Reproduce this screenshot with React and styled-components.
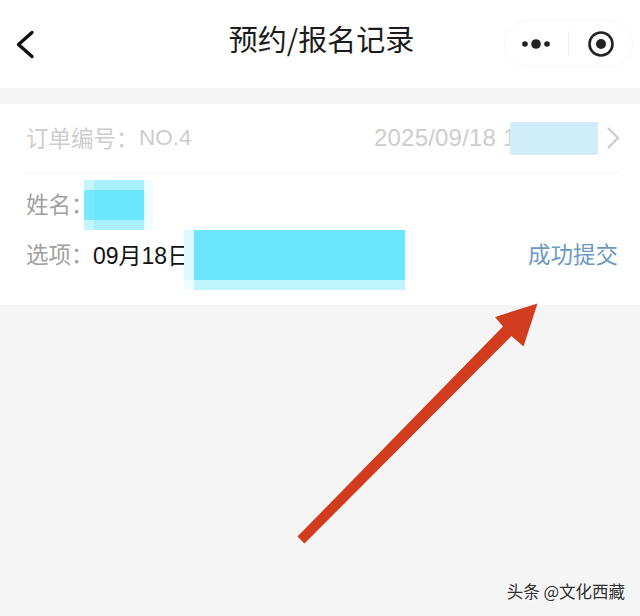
import React from 'react'
import styled, { createGlobalStyle } from 'styled-components'

const GlobalStyle = createGlobalStyle`
  html, body {
    margin:0;
    padding:0;
    background:#f5f5f5;
  }
  body {
    font-family:"Liberation Sans","Noto Sans CJK SC",sans-serif;
  }
`

const Page = styled.div`
  position:relative;
  width:640px;
  height:616px;
  overflow:hidden;
  background:#f5f5f5;
`

const NavBar = styled.header`
  height:88px;
  background:#fff;
  display:grid;
  grid-template-columns:1fr auto 1fr;
  align-items:center;
  padding:0 7px 12px 10px;
  box-sizing:border-box;
`

const BackButton = styled.svg`
  width:20px;
  height:32px;
  display:block;
  margin:14px 0 0 6px;
`

const Title = styled.h1`
  margin:0;
  font-family:"Noto Sans CJK SC",sans-serif;
  font-size:29px;
  line-height:40px;
  font-weight:400;
  color:#1c1c1c;
  white-space:nowrap;
`

const Capsule = styled.div`
  justify-self:end;
  width:129px;
  height:47px;
  margin-top:11px;
  box-sizing:border-box;
  border:1px solid #f7f7f7;
  border-radius:24px;
  display:flex;
  align-items:center;
`

const CapsuleSide = styled.div`
  flex:1;
  height:100%;
  display:flex;
  align-items:center;
  justify-content:center;
  & + & {
    position:relative;
    padding-left:2px;
  }
  & + &::before {
    content:"";
    position:absolute;
    left:0;
    top:10px;
    bottom:10px;
    width:1px;
    background:#f2f2f2;
  }
`

const Card = styled.section`
  margin-top:16px;
  height:201px;
  background:#fff;
  padding:0 20px 0 26px;
  box-sizing:border-box;
`

const CardHead = styled.div`
  height:68px;
  margin-left:-2px;
  padding-left:2px;
  border-bottom:1px solid #f3f3f3;
  display:flex;
  align-items:center;
  justify-content:space-between;
  color:#cdcdcd;
  font-size:22.5px;
`

const OrderNo = styled.span`
  display:flex;
  align-items:center;
`

const OrderLabel = styled.span`
  width:113px;
  margin-bottom:3px;
  white-space:nowrap;
`

const DateWrap = styled.div`
  display:flex;
  align-items:center;
  color:#cdcdcd;
`

const DateText = styled.span`
  width:136px;
  white-space:nowrap;
  font-size:24px;
  letter-spacing:0.2px;
`

// the mosaic lies over the end of the date, so it needs its own paint layer
const HeadMask = styled.div`
  position:relative;
  width:88px;
  height:33px;
  border-radius:2px;
  background:#d0edfc;
`

const Chevron = styled.svg`
  width:14px;
  height:24px;
  margin-left:8px;
  display:block;
`

const CardBody = styled.div`
  padding-top:7px;
`

const Row = styled.div`
  height:50px;
  display:flex;
  align-items:flex-start;
  font-size:22.5px;
`

const Label = styled.span`
  margin-top:1px;
  line-height:50px;
  color:#a0a0a0;
  white-space:nowrap;
  width:${p => p.$width}px;
`

const Value = styled.span`
  margin-top:1px;
  line-height:50px;
  color:#111;
  font-size:23px;
  white-space:nowrap;
  width:91px;
`

const NameMask = styled.div`
  width:69px;
  height:50px;
  background:
    linear-gradient(#6be6fd,#6be6fd) 10px 10px / 50px 30px no-repeat,
    linear-gradient(#7ae8fc,#7ae8fc) 0 10px / 10px 30px no-repeat,
    linear-gradient(#a9effd,#a9effd) 10px 0 / 50px 50px no-repeat,
    linear-gradient(#c4f5fe,#c4f5fe) 0 0 / 10px 50px no-repeat,
    linear-gradient(#f0fdff,#f0fdff) 60px 0 / 9px 50px no-repeat;
`

const OptionMask = styled.div`
  width:221px;
  height:60px;
  margin-bottom:-10px;
  background:
    linear-gradient(#6be6fd,#6be6fd) 10px 0 / 211px 50px no-repeat,
    linear-gradient(#bef5fe,#bef5fe) 10px 50px / 211px 10px no-repeat,
    linear-gradient(#dcfafe,#dcfafe) 0 0 / 10px 50px no-repeat,
    #effdff;
`

const Status = styled.span`
  margin:1px 2px 0 auto;
  line-height:50px;
  font-size:22.5px;
  color:#6d98c2;
  white-space:nowrap;
`

const ArrowLayer = styled.svg`
  position:absolute;
  left:0;
  top:0;
  width:640px;
  height:616px;
  pointer-events:none;
`

const Watermark = styled.div`
  position:absolute;
  right:15px;
  top:579px;
  font-family:"Noto Sans CJK SC",sans-serif;
  font-size:16.5px;
  line-height:24px;
  color:#2e2e2e;
  white-space:nowrap;
  text-shadow:1px 1px 1px #fff;
`

const App = () => {
  return (
    <Page>
      <GlobalStyle />
      <NavBar>
        <BackButton viewBox="0 0 20 32">
          <path d="M16 3.5 L2.5 15.5 L16 27.5" fill="none" stroke="#111" strokeWidth="3.4" strokeLinecap="round" strokeLinejoin="round" />
        </BackButton>
        <Title>预约/报名记录</Title>
        <Capsule>
          <CapsuleSide>
            <svg width="30" height="12" viewBox="0 0 30 12">
              <circle cx="4" cy="6" r="2.8" fill="#222" />
              <circle cx="15" cy="6" r="4.8" fill="#222" />
              <circle cx="26" cy="6" r="2.8" fill="#222" />
            </svg>
          </CapsuleSide>
          <CapsuleSide>
            <svg width="28" height="28" viewBox="0 0 28 28">
              <circle cx="14" cy="14" r="11.5" fill="none" stroke="#222" strokeWidth="2.6" />
              <circle cx="14" cy="14" r="5" fill="#222" />
            </svg>
          </CapsuleSide>
        </Capsule>
      </NavBar>
      <Card>
        <CardHead>
          <OrderNo>
            <OrderLabel>订单编号：</OrderLabel>
            <span>NO.4</span>
          </OrderNo>
          <DateWrap>
            <DateText>2025/09/18 1</DateText>
            <HeadMask />
            <Chevron viewBox="0 0 14 24">
              <path d="M2 2 L12 12 L2 22" fill="none" stroke="#cdcdcd" strokeWidth="2.4" />
            </Chevron>
          </DateWrap>
        </CardHead>
        <CardBody>
          <Row>
            <Label $width={58}>姓名：</Label>
            <NameMask />
          </Row>
          <Row>
            <Label $width={67}>选项：</Label>
            <Value>09月18日</Value>
            <OptionMask />
            <Status>成功提交</Status>
          </Row>
        </CardBody>
      </Card>
      <ArrowLayer viewBox="0 0 640 616">
        <polygon points="537.5,303.5 495,317 503,326.5 297.5,536.5 304.5,543.5 511.5,336 523.5,346.5" fill="#d23c1e" />
      </ArrowLayer>
      <Watermark>头条 @文化西藏</Watermark>
    </Page>
  )
}

export default App
